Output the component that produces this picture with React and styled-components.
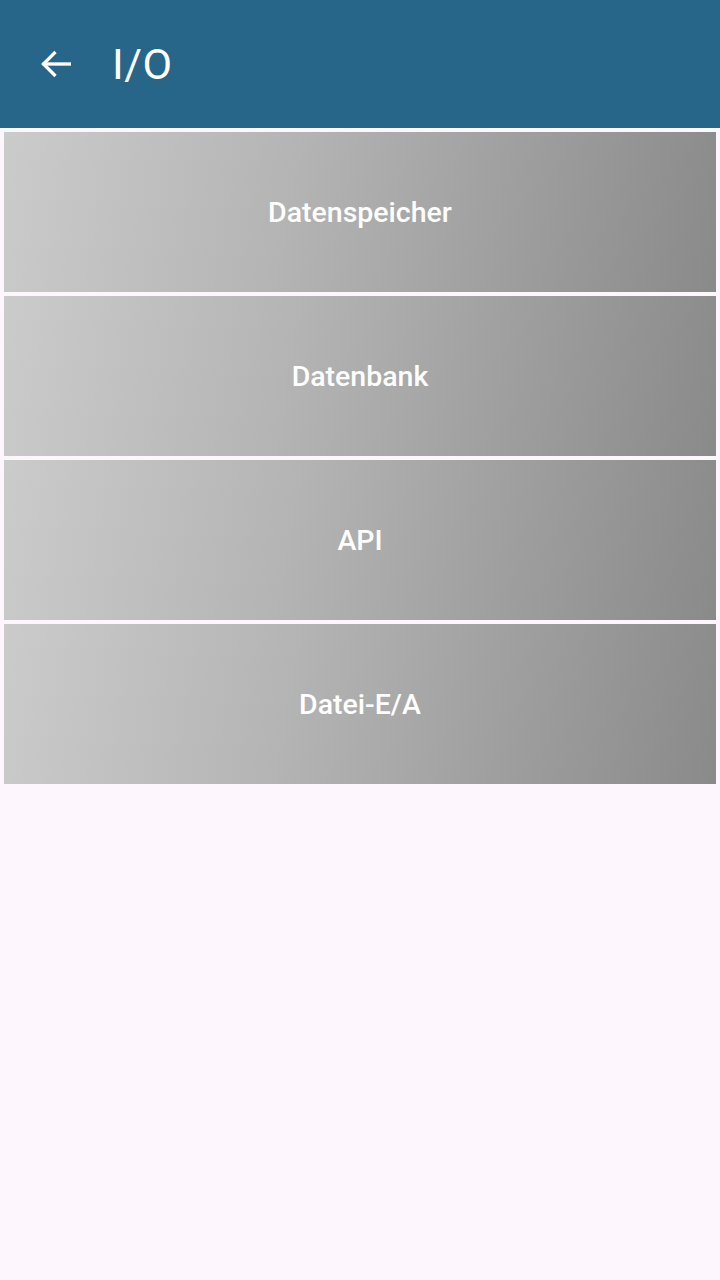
import styled, { createGlobalStyle } from 'styled-components';

const GlobalStyle = createGlobalStyle`
  html, body {
    margin: 0;
    padding: 0;
    background: #fdf7fd;
    font-family: Roboto, "Liberation Sans", sans-serif;
  }
`;

const Page = styled.div`
  min-height: 1280px;
  background: #fdf7fd;
`;

const AppBar = styled.header`
  height: 128px;
  background: #276589;
  display: flex;
  align-items: center;
  padding-left: 36px;
  gap: 36px;
  color: #fff;
`;

const BackButton = styled.button`
  width: 40px;
  height: 40px;
  padding: 0;
  border: 0;
  background: none;
  color: #fff;
  display: flex;
  align-items: center;
  justify-content: center;
`;

const Title = styled.h1`
  margin: 0;
  font-size: 43px;
  font-weight: 400;
  letter-spacing: 0.5px;
`;

const List = styled.div`
  display: flex;
  flex-direction: column;
  gap: 4px;
  padding: 4px;
`;

const Tile = styled.button`
  height: 160px;
  border: 0;
  background: linear-gradient(100deg, #cbcbcb 0%, #b4b4b4 40%, #8a8a8a 100%);
  color: #fff;
  font-family: Roboto, "Liberation Sans", sans-serif;
  font-size: 28.5px;
  font-weight: 500;
  display: flex;
  align-items: center;
  justify-content: center;
`;

const items = ['Datenspeicher', 'Datenbank', 'API', 'Datei-E/A'];

export default function App() {
  return (
    <Page>
      <GlobalStyle />
      <AppBar>
        <BackButton aria-label="Zurück">
          <svg width="40" height="40" viewBox="0 0 24 24" fill="none" stroke="currentColor" strokeWidth="2" strokeLinecap="square">
            <path d="M20 12H5" />
            <path d="M11 5.5 4.5 12l6.5 6.5" />
          </svg>
        </BackButton>
        <Title>I/O</Title>
      </AppBar>
      <List>
        {items.map((label) => (
          <Tile key={label}>{label}</Tile>
        ))}
      </List>
    </Page>
  );
}
